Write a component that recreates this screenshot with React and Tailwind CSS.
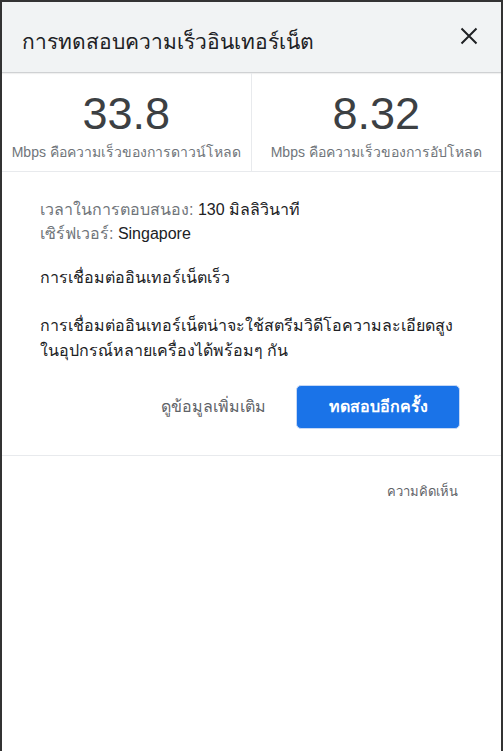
import React from "react";

export default function App() {
  const font = { fontFamily: '"Liberation Sans", Arial, "Noto Sans", sans-serif' };
  return (
    <div className="w-[503px] h-[751px] bg-[#333333] pt-[2px] px-[2px] overflow-hidden" style={font}>
      <div className="w-full h-full bg-white flex flex-col">
        <div className="h-[71px] bg-[#f1f3f4] border-b border-[#cfd1d3] flex items-center justify-between pl-[20px] pr-[23px] shadow-[0_1px_1px_rgba(0,0,0,0.06)]">
          <div className="text-[21px] text-[#202124] pt-[9px]">การทดสอบความเร็วอินเทอร์เน็ต</div>
          <svg width="18" height="18" viewBox="0 0 18 18" className="mb-[3px]">
            <path d="M1.5 1.5 L16.5 16.5 M16.5 1.5 L1.5 16.5" stroke="#202124" strokeWidth="2" fill="none" />
          </svg>
        </div>
        <div className="grid grid-cols-2 h-[99px] border-b border-[#e8eaed]">
          <div className="flex flex-col items-center border-r border-[#e8eaed] pt-[16px]">
            <div className="text-[45px] leading-[50px] text-[#3c4043]">33.8</div>
            <div className="text-[14px] text-[#70757a] mt-[3px]">Mbps คือความเร็วของการดาวน์โหลด</div>
          </div>
          <div className="flex flex-col items-center pt-[16px]">
            <div className="text-[45px] leading-[50px] text-[#3c4043]">8.32</div>
            <div className="text-[14px] text-[#70757a] mt-[3px]">Mbps คือความเร็วของการอัปโหลด</div>
          </div>
        </div>
        <div className="px-[38px] pt-[26px] text-[16px] text-[#202124]">
          <div className="leading-[24px]">
            <span className="text-[#70757a]">เวลาในการตอบสนอง: </span>130 มิลลิวินาที
          </div>
          <div className="leading-[24px]">
            <span className="text-[#70757a]">เซิร์ฟเวอร์: </span>Singapore
          </div>
          <div className="mt-[20px] leading-[24px]">การเชื่อมต่ออินเทอร์เน็ตเร็ว</div>
          <div className="mt-[23px] leading-[25px]">
            การเชื่อมต่ออินเทอร์เน็ตน่าจะใช้สตรีมวิดีโอความละเอียดสูง
            <br />
            ในอุปกรณ์หลายเครื่องได้พร้อมๆ กัน
          </div>
          <div className="flex items-center justify-end gap-[30px] mt-[22px] pr-[3px]">
            <span className="text-[#5f6368]">ดูข้อมูลเพิ่มเติม</span>
            <button className="w-[164px] h-[44px] rounded-[5px] bg-[#1a73e8] text-white font-bold text-[16px] border border-[#c6d8f5]">
              ทดสอบอีกครั้ง
            </button>
          </div>
        </div>
        <div className="mt-[26px] border-t border-[#e8eaed]"></div>
        <div className="flex justify-end pr-[43px] pt-[26px]">
          <span className="text-[13px] text-[#5f6368]">ความคิดเห็น</span>
        </div>
      </div>
    </div>
  );
}
